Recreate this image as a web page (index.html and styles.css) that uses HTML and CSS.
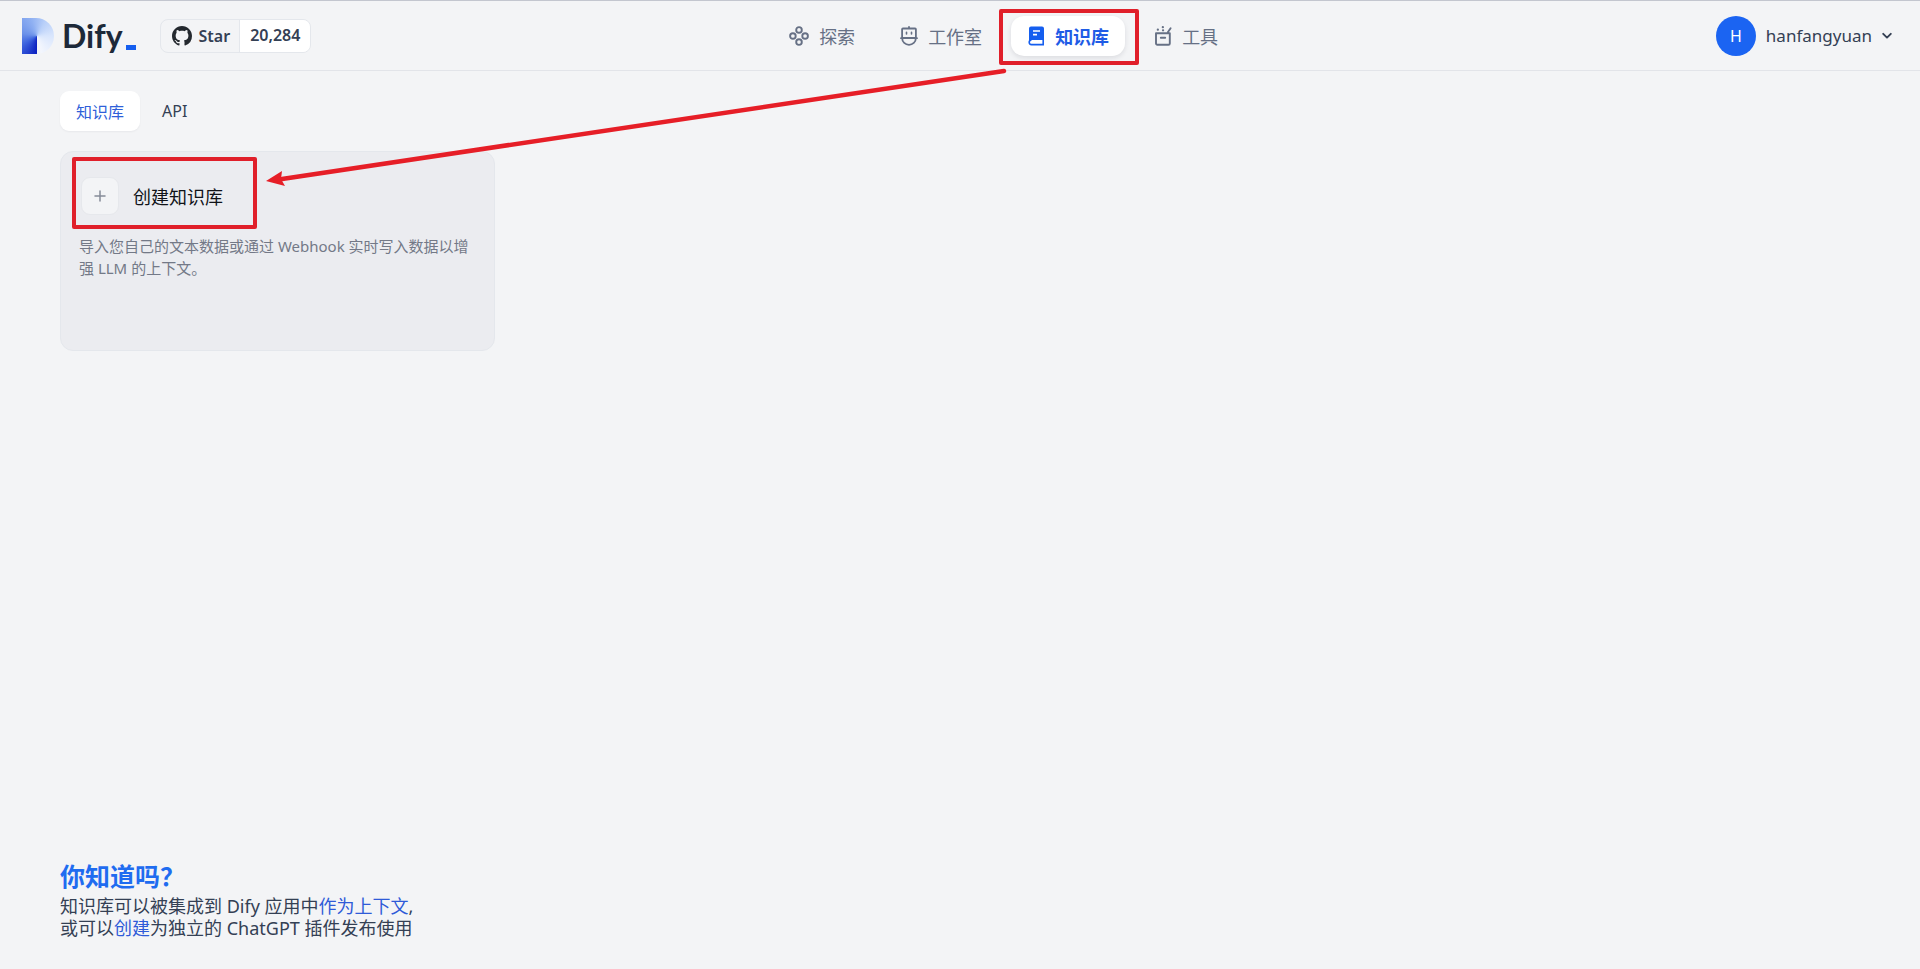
FILE: index.html
```html
<!DOCTYPE html>
<html lang="zh-CN">
<head>
<meta charset="utf-8">
<title>知识库 - Dify</title>
<link rel="stylesheet" href="styles.css">
</head>
<body>
<header class="header">
  <div class="brand">
    <a class="logo" href="#" aria-label="Dify">
      <span class="logo-mark"></span>
      <span class="logo-name">Dify</span>
      <span class="logo-dash"></span>
    </a>
    <a class="github" href="#">
      <span class="github-star">
        <svg width="20" height="20" viewBox="0 0 16 16" aria-hidden="true"><path fill="#24292f" d="M8 0C3.58 0 0 3.58 0 8c0 3.54 2.29 6.53 5.47 7.59.4.07.55-.17.55-.38 0-.19-.01-.82-.01-1.49-2.01.37-2.53-.49-2.69-.94-.09-.23-.48-.94-.82-1.13-.28-.15-.68-.52-.01-.53.63-.01 1.08.58 1.23.82.72 1.21 1.87.87 2.33.66.07-.52.28-.87.51-1.07-1.78-.2-3.64-.89-3.64-3.95 0-.87.31-1.59.82-2.15-.08-.2-.36-1.02.08-2.12 0 0 .67-.21 2.2.82.64-.18 1.32-.27 2-.27s1.36.09 2 .27c1.53-1.04 2.2-.82 2.2-.82.44 1.1.16 1.92.08 2.12.51.56.82 1.27.82 2.15 0 3.07-1.87 3.75-3.65 3.95.29.25.54.73.54 1.48 0 1.07-.01 1.93-.01 2.2 0 .21.15.46.55.38A8.01 8.01 0 0 0 16 8c0-4.42-3.58-8-8-8z"/></svg>
        Star
      </span>
      <span class="github-count">20,284</span>
    </a>
  </div>
  <nav class="nav">
    <a class="nav-item" href="#">
      <svg width="20" height="20" viewBox="0 0 20 20" fill="none" stroke="#667085" stroke-width="1.900" aria-hidden="true"><circle cx="10" cy="3.900" r="2.800"/><circle cx="3.900" cy="10" r="2.800"/><circle cx="16.100" cy="10" r="2.800"/><circle cx="10" cy="16.100" r="2.800"/></svg>
      探索
    </a>
    <a class="nav-item" href="#">
      <svg width="18" height="20" viewBox="0 0 18 20" fill="none" stroke="#667085" stroke-width="1.800" stroke-linecap="round" stroke-linejoin="round" aria-hidden="true"><path d="M9 .9v1M2.900 2.500h12.200a.8.8 0 0 1 .8.8v8.700H2.100V3.300a.8.8 0 0 1 .8-.8zM1 12.200h16M2.200 12.500a6.800 6.300 0 0 0 13.600 0"/><path d="M6.500 6.200v1.800M11.500 6.200v1.800" stroke-width="1.600"/></svg>
      工作室
    </a>
    <a class="nav-item nav-item-active" href="#" aria-current="page">
      <svg width="18" height="20" viewBox="0 0 18 20" aria-hidden="true"><path fill="#155eef" fill-rule="evenodd" d="M4 .5h11A2 2 0 0 1 17 2.500V14H4.500Q2.800 14 2 15V2.500A2 2 0 0 1 4 .5zM6 4.200v1.600h7V4.200zM6 7.800v1.600h4V7.800z"/><path d="M16.200 14v4.600H4.500a1.900 1.900 0 0 1 0-4.600" fill="none" stroke="#155eef" stroke-width="1.600"/></svg>
      知识库
    </a>
    <a class="nav-item" href="#">
      <svg width="18" height="20" viewBox="0 0 18 20" fill="none" stroke="#667085" stroke-width="1.900" stroke-linecap="round" stroke-linejoin="round" aria-hidden="true"><path d="M2 7.200h13.800v10.300a1.300 1.300 0 0 1-1.300 1.300H3.300A1.300 1.300 0 0 1 2 17.500V7.200zM6.800 11.700h4.400M13.800 6.300 16.600 2.300"/><path d="M3.800 3.700h.1M8.800 1.200h.1M9 4.300h.1" stroke-width="2.200"/></svg>
      工具
    </a>
  </nav>
  <button class="account" type="button">
    <span class="avatar">H</span>
    <span>hanfangyuan</span>
    <svg width="10" height="8" viewBox="0 0 10 8" fill="none" stroke="#344054" stroke-width="1.900" stroke-linecap="round" stroke-linejoin="round" aria-hidden="true"><path d="M1.200 1.800 5 5.600l3.800-3.800"/></svg>
  </button>
</header>
<div class="tabs">
  <button class="tab tab-active" type="button">知识库</button>
  <button class="tab" type="button">API</button>
</div>
<main class="cards">
  <a class="card" href="#">
    <span class="card-head">
      <span class="card-icon">
        <svg width="12" height="12" viewBox="0 0 12 12" stroke="#858b98" stroke-width="1.500" stroke-linecap="round" aria-hidden="true"><path d="M6 1v10M1 6h10"/></svg>
      </span>
      创建知识库
    </span>
    <span class="card-text">导入您自己的文本数据或通过 Webhook 实时写入数据以增强 LLM 的上下文。</span>
  </a>
</main>
<footer class="footer">
  <h3 class="footer-title">你知道吗？</h3>
  <p class="footer-text">知识库可以被集成到 Dify 应用中<a href="#">作为上下文</a>,<br>或可以<a href="#">创建</a>为独立的 ChatGPT 插件发布使用</p>
</footer>
<svg class="annotation" width="1160" height="240" viewBox="0 0 1160 240" fill="none" stroke="#e01f2a" stroke-width="4" stroke-linejoin="round" stroke-linecap="round" aria-hidden="true">
  <rect x="1001" y="11" width="136" height="52"/>
  <rect x="74" y="159" width="181" height="68"/>
  <path d="M1004 71 282 179" stroke-width="4.500" stroke="#e61e27"/>
  <path d="M266 181 282 171 281 179 285 186z" fill="#e61e27" stroke="none"/>
</svg>
</body>
</html>
```
FILE: styles.css
```css
* {
  box-sizing: border-box;
}

body {
  position: relative;
  display: flex;
  flex-direction: column;
  min-height: 100vh;
  margin: 0;
  background: #f3f4f6;
  color: #344054;
  font-family: "Noto Sans", "Noto Sans CJK SC", sans-serif;
  font-size: 18px;
}

a {
  color: #2f5bd8;
  text-decoration: none;
}

button {
  border: 0;
  background: none;
  color: inherit;
  font: inherit;
  cursor: pointer;
}

.header {
  display: flex;
  align-items: center;
  justify-content: space-between;
  height: 71px;
  padding: 0 28px 0 22px;
  border-top: 1px solid #c3c6cf;
  border-bottom: 1px solid #e2e4e9;
}

.brand {
  display: flex;
  align-items: center;
  gap: 24px;
}

.logo {
  display: flex;
  align-items: center;
}

.logo-mark {
  width: 32px;
  height: 36px;
  margin-right: 8px;
  border-radius: 0 18px 18px 0;
  background: conic-gradient(from 180deg at 15px 18px, #0a1fc0, #3f66df 60deg, #6b91e9 100deg, #8fb0f2 160deg, #b9d0f9 210deg, #d9e6fd 270deg, #f3f6fd 345deg, #f3f4f6);
}

.logo-name {
  color: #1d2939;
  font-family: Lato, sans-serif;
  font-size: 32px;
  font-weight: 700;
  line-height: 36px;
}

.logo-dash {
  align-self: flex-end;
  width: 10px;
  height: 5px;
  margin: 0 0 4px 3px;
  background: #155eef;
}

.github {
  display: flex;
  height: 34px;
  border: 1px solid #e4e7ec;
  border-radius: 8px;
  overflow: hidden;
  color: #344054;
  font-size: 16px;
  font-weight: 600;
  line-height: 30px;
}

.github-star {
  display: flex;
  align-items: center;
  gap: 7px;
  padding: 0 9px 0 11px;
  border-right: 1px solid #e4e7ec;
}

.github-count {
  padding: 0 10px;
  background: #fff;
}

.nav {
  display: flex;
  gap: 13px;
  margin-right: 20px;
}

.nav-item {
  display: flex;
  align-items: center;
  gap: 10px;
  height: 40px;
  padding: 0 16px;
  border-radius: 13px;
  color: #667085;
}

.nav-item-active {
  background: #fff;
  box-shadow: 0 2px 5px rgba(16, 24, 40, 0.1);
  color: #1f5ce6;
  font-weight: 700;
}

.account {
  display: flex;
  align-items: center;
  gap: 10px;
  padding: 0;
  font-size: 17px;
}

.avatar {
  width: 40px;
  height: 40px;
  border-radius: 50%;
  background: #1b64f2;
  color: #fff;
  font-size: 16px;
  line-height: 40px;
  text-align: center;
}

.tabs {
  display: flex;
  gap: 6px;
  padding: 20px 60px;
}

.tab {
  height: 40px;
  padding: 0 16px;
  border-radius: 9px;
  font-size: 16px;
}

.tab-active {
  background: #fff;
  box-shadow: 0 1px 2px rgba(16, 24, 40, 0.05);
  color: #2f5fd9;
}

.cards {
  display: grid;
  flex: 1;
  grid-template-columns: repeat(4, 1fr);
  align-content: start;
  gap: 20px;
  padding: 0 60px;
}

.card {
  display: flex;
  flex-direction: column;
  gap: 20px;
  min-height: 200px;
  padding: 25px 17px 17px 18px;
  border: 1px solid #e4e7ec;
  border-radius: 13px;
  background: #ebecf0;
  color: #101318;
}

.card-head {
  display: flex;
  align-items: center;
  gap: 14px;
  padding-left: 2px;
}

.card-icon {
  display: grid;
  place-items: center;
  width: 38px;
  height: 38px;
  border: 1px solid #e6e8ec;
  border-radius: 9px;
  background: #f3f4f6;
}

.card-text {
  color: #737987;
  font-size: 15px;
  line-height: 22px;
}

.footer {
  padding: 0 60px 30px;
}

.footer-title {
  margin: 0;
  color: #1f6cf0;
  font-size: 25px;
  font-weight: 700;
  line-height: 38px;
}

.footer-text {
  margin: 0;
  line-height: 22px;
}

.annotation {
  position: absolute;
  top: 0;
  left: 0;
  pointer-events: none;
}
```
